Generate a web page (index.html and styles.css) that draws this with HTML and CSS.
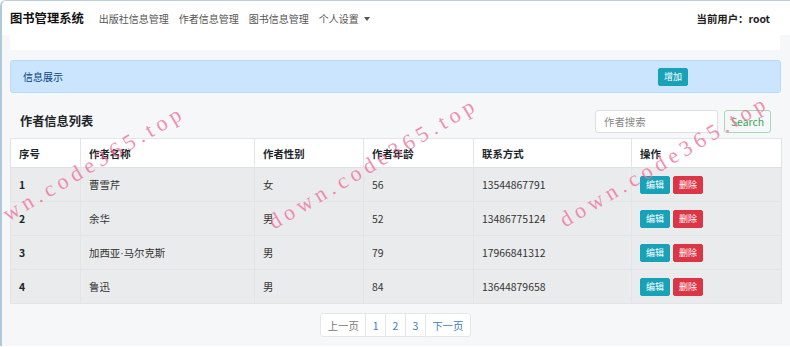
FILE: index.html
```html
<!DOCTYPE html>
<html lang="zh-CN">
<head>
    <meta charset="UTF-8">
    <title>图书管理系统</title>
    <link rel="stylesheet" href="styles.css">
</head>
<body>
    <div class="frame">
        <nav class="navbar">
            <span class="brand">图书管理系统</span>
            <a class="nav-link" href="#">出版社信息管理</a>
            <a class="nav-link" href="#">作者信息管理</a>
            <a class="nav-link" href="#">图书信息管理</a>
            <a class="nav-link dropdown" href="#">个人设置 <span class="caret"></span></a>
            <span class="user">当前用户：root</span>
        </nav>
        <div class="strip"></div>

        <div class="alert">
            <span>信息展示</span>
            <button class="btn btn-info">增加</button>
        </div>

        <div class="toolbar">
            <h2>作者信息列表</h2>
            <form class="search">
                <input type="text" placeholder="作者搜索">
                <button type="button" class="btn-outline">Search</button>
            </form>
        </div>

        <table class="table">
            <colgroup>
                <col class="c1"><col class="c2"><col class="c3">
                <col class="c4"><col class="c5"><col class="c6">
            </colgroup>
            <thead>
                <tr>
                    <th>序号</th>
                    <th>作者名称</th>
                    <th>作者性别</th>
                    <th>作者年龄</th>
                    <th>联系方式</th>
                    <th>操作</th>
                </tr>
            </thead>
            <tbody>
                <tr>
                    <th>1</th><td>曹雪芹</td><td>女</td><td>56</td><td>13544867791</td>
                    <td><button class="btn btn-info">编辑</button><button class="btn btn-danger">删除</button></td>
                </tr>
                <tr>
                    <th>2</th><td>余华</td><td>男</td><td>52</td><td>13486775124</td>
                    <td><button class="btn btn-info">编辑</button><button class="btn btn-danger">删除</button></td>
                </tr>
                <tr>
                    <th>3</th><td>加西亚<span class="dot">·</span>马尔克斯</td><td>男</td><td>79</td><td>17966841312</td>
                    <td><button class="btn btn-info">编辑</button><button class="btn btn-danger">删除</button></td>
                </tr>
                <tr>
                    <th>4</th><td>鲁迅</td><td>男</td><td>84</td><td>13644879658</td>
                    <td><button class="btn btn-info">编辑</button><button class="btn btn-danger">删除</button></td>
                </tr>
            </tbody>
        </table>

        <ul class="pagination">
            <li class="disabled">上一页</li>
            <li>1</li>
            <li>2</li>
            <li>3</li>
            <li>下一页</li>
        </ul>

        <!-- watermark overlay -->
        <div class="mark mark-1">down.code365.top</div>
        <div class="mark mark-2">down.code365.top</div>
        <div class="mark mark-3">down.code365.top</div>
    </div>
</body>
</html>
```

FILE: styles.css
```css
body {
    margin: 0;
    font-family: "Noto Sans CJK SC", "Noto Sans", sans-serif;
    font-size: 10px;
    color: #212529;
    background: #fff;
}

.frame {
    position: relative;
    overflow: hidden;
    height: 346px;
    background: #f6f7f9;
    border-top: 1px solid #b9cfe0;
    border-left: 2px solid #b0c8dc;
    border-top-left-radius: 6px;
    box-sizing: border-box;
}

.navbar {
    display: flex;
    align-items: center;
    height: 34px;
    padding: 0 8px 0 8px;
    background: #fff;
}

.brand {
    font-size: 12.3px;
    font-weight: bold;
    color: #111;
    margin-right: 15px;
}

.nav-link {
    color: #555;
    text-decoration: none;
    margin-right: 10px;
}

.caret {
    display: inline-block;
    margin-left: 3px;
    vertical-align: 2px;
    border-top: 4px solid #555;
    border-left: 3px solid transparent;
    border-right: 3px solid transparent;
}

.user {
    margin-left: auto;
    margin-right: 12px;
    font-weight: bold;
    font-size: 10.4px;
    color: #222;
}

.strip {
    height: 15px;
    margin: 0 10px 0 8px;
    background: #fff;
}

.alert {
    display: flex;
    align-items: center;
    height: 33px;
    margin: 10px 9px 0 8px;
    padding: 0 92px 0 12px;
    justify-content: space-between;
    background: #cce5ff;
    border: 1px solid #b8daff;
    border-radius: 3px;
    color: #004085;
    box-sizing: border-box;
}

.btn {
    font-family: inherit;
    font-size: 9px;
    border: 1px solid transparent;
    border-radius: 2px;
    color: #fff;
    height: 18px;
    padding: 0 5px;
    cursor: pointer;
}

.btn-info {
    background: #17a2b8;
    border-color: #17a2b8;
}

.btn-danger {
    background: #dc3545;
    border-color: #dc3545;
    margin-left: 3px;
}

.toolbar {
    display: flex;
    align-items: center;
    justify-content: space-between;
    height: 45px;
    padding: 0 19px 0 18px;
}

.toolbar h2 {
    margin: 11px 0 0;
    font-size: 12.2px;
    font-weight: bold;
}

.search {
    display: flex;
    gap: 6px;
    margin-top: 11px;
}

.search input {
    width: 123px;
    height: 23px;
    box-sizing: border-box;
    padding: 0 8px;
    font-family: inherit;
    font-size: 10.4px;
    border: 1px solid #dcdfe3;
    border-radius: 3px;
    background: #fff;
}

.search input::placeholder {
    color: #888;
}

.btn-outline {
    height: 23px;
    width: 47px;
    font-family: inherit;
    font-size: 10.4px;
    color: #3aa655;
    background: transparent;
    border: 1px solid #a9d7b4;
    border-radius: 3px;
    padding: 0;
}

.table {
    width: 771px;
    margin-left: 8px;
    border-collapse: collapse;
    table-layout: fixed;
    font-size: 10.4px;
}

.table th,
.table td {
    text-align: left;
    padding: 0 8px;
    border: 1px solid #e2e4e6;
}

.table thead th {
    height: 28px;
    background: #fff;
    font-weight: bold;
    border-bottom: 1px solid #dee2e6;
}

.table tbody tr {
    height: 34px;
    background: #eaebec;
}

.table tbody td {
    color: #333;
}

.dot {
    font-family: "Liberation Sans", sans-serif;
}

.c1 { width: 70px; }
.c2 { width: 174px; }
.c3 { width: 109px; }
.c4 { width: 110px; }
.c5 { width: 158px; }
.c6 { width: 150px; }

.pagination {
    display: flex;
    justify-content: center;
    list-style: none;
    margin: 9px 0 0;
    padding: 0;
}

.pagination li {
    height: 24px;
    line-height: 23px;
    box-sizing: border-box;
    padding: 0 6.5px;
    border: 1px solid #e4e7ea;
    margin-left: -1px;
    background: #fff;
    color: #3d7dbd;
    font-size: 10.4px;
}

.pagination li:first-child {
    border-radius: 3px 0 0 3px;
}

.pagination li:last-child {
    border-radius: 0 3px 3px 0;
}

.pagination .disabled {
    color: #777;
}

.mark {
    position: absolute;
    font-family: "Liberation Serif", serif;
    font-size: 22px;
    letter-spacing: 4.8px;
    color: rgba(240, 112, 152, 0.78);
    white-space: nowrap;
    transform: rotate(-30.5deg);
    transform-origin: left bottom;
    pointer-events: none;
}

.mark-1 { left: -18px; top: 216px; }
.mark-2 { left: 275px; top: 208px; }
.mark-3 { left: 566px; top: 206px; }
```
